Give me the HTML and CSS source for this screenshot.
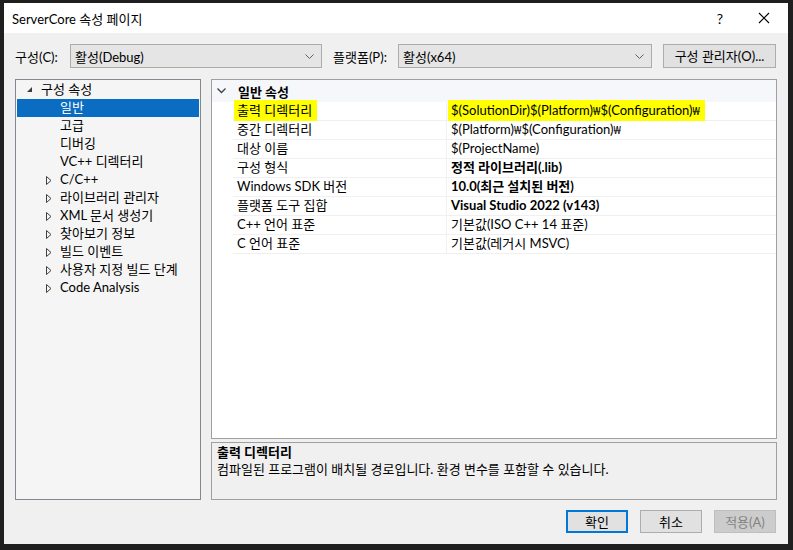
FILE: index.html
```html
<!DOCTYPE html>
<html lang="ko">
<head>
  <meta charset="UTF-8">
  <title>ServerCore 속성 페이지</title>
  <link rel="stylesheet" href="styles.css">
</head>
<body>
  <div class="dialog">
    <div class="titlebar">
      <span class="title">ServerCore 속성 페이지</span>
      <span class="help">?</span>
      <svg class="close" width="12" height="12" viewBox="0 0 12 12"><path d="M1 1 L11 11 M11 1 L1 11" stroke="#000" stroke-width="1.1" fill="none"/></svg>
    </div>

    <div class="toolbar">
      <span class="lbl lbl-conf">구성(C):</span>
      <div class="combo combo-conf">
        <span>활성(Debug)</span>
        <svg width="9" height="5" viewBox="0 0 9 5"><path d="M0.5 0.5 L4.5 4.5 L8.5 0.5" stroke="#606060" fill="none"/></svg>
      </div>
      <span class="lbl lbl-plat">플랫폼(P):</span>
      <div class="combo combo-plat">
        <span>활성(x64)</span>
        <svg width="9" height="5" viewBox="0 0 9 5"><path d="M0.5 0.5 L4.5 4.5 L8.5 0.5" stroke="#606060" fill="none"/></svg>
      </div>
      <button class="btn btn-mgr">구성 관리자(O)...</button>
    </div>

    <div class="main">
      <div class="tree">
        <div class="node root"><span class="tri-open"></span>구성 속성</div>
        <div class="node leaf selected">일반</div>
        <div class="node leaf">고급</div>
        <div class="node leaf">디버깅</div>
        <div class="node leaf">VC++ 디렉터리</div>
        <div class="node"><svg class="tri-closed" width="6" height="9" viewBox="0 0 6 9"><path d="M0.5 0.5 L5 4.5 L0.5 8.5 Z" stroke="#404040" fill="none"/></svg>C/C++</div>
        <div class="node"><svg class="tri-closed" width="6" height="9" viewBox="0 0 6 9"><path d="M0.5 0.5 L5 4.5 L0.5 8.5 Z" stroke="#404040" fill="none"/></svg>라이브러리 관리자</div>
        <div class="node"><svg class="tri-closed" width="6" height="9" viewBox="0 0 6 9"><path d="M0.5 0.5 L5 4.5 L0.5 8.5 Z" stroke="#404040" fill="none"/></svg>XML 문서 생성기</div>
        <div class="node"><svg class="tri-closed" width="6" height="9" viewBox="0 0 6 9"><path d="M0.5 0.5 L5 4.5 L0.5 8.5 Z" stroke="#404040" fill="none"/></svg>찾아보기 정보</div>
        <div class="node"><svg class="tri-closed" width="6" height="9" viewBox="0 0 6 9"><path d="M0.5 0.5 L5 4.5 L0.5 8.5 Z" stroke="#404040" fill="none"/></svg>빌드 이벤트</div>
        <div class="node"><svg class="tri-closed" width="6" height="9" viewBox="0 0 6 9"><path d="M0.5 0.5 L5 4.5 L0.5 8.5 Z" stroke="#404040" fill="none"/></svg>사용자 지정 빌드 단계</div>
        <div class="node"><svg class="tri-closed" width="6" height="9" viewBox="0 0 6 9"><path d="M0.5 0.5 L5 4.5 L0.5 8.5 Z" stroke="#404040" fill="none"/></svg>Code Analysis</div>
      </div>

      <div class="right">
        <div class="grid">
          <div class="category">
            <svg class="chev" width="9" height="6" viewBox="0 0 9 6"><path d="M0.5 0.5 L4.5 4.5 L8.5 0.5" stroke="#404040" stroke-width="1.3" fill="none"/></svg>
            <span>일반 속성</span>
          </div>
          <div class="prop">
            <div class="name"><span class="mark">출력 디렉터리</span></div>
            <div class="value"><span class="mark">$(SolutionDir)$(Platform)<span class="won">₩</span>$(Configuration)<span class="won">₩</span></span></div>
          </div>
          <div class="prop">
            <div class="name">중간 디렉터리</div>
            <div class="value">$(Platform)<span class="won">₩</span>$(Configuration)<span class="won">₩</span></div>
          </div>
          <div class="prop">
            <div class="name">대상 이름</div>
            <div class="value">$(ProjectName)</div>
          </div>
          <div class="prop">
            <div class="name">구성 형식</div>
            <div class="value bold">정적 라이브러리(.lib)</div>
          </div>
          <div class="prop">
            <div class="name">Windows SDK 버전</div>
            <div class="value bold">10.0(최근 설치된 버전)</div>
          </div>
          <div class="prop">
            <div class="name">플랫폼 도구 집합</div>
            <div class="value bold">Visual Studio 2022 (v143)</div>
          </div>
          <div class="prop">
            <div class="name">C++ 언어 표준</div>
            <div class="value">기본값(ISO C++ 14 표준)</div>
          </div>
          <div class="prop">
            <div class="name">C 언어 표준</div>
            <div class="value">기본값(레거시 MSVC)</div>
          </div>
        </div>

        <div class="desc">
          <div class="desc-title">출력 디렉터리</div>
          <div class="desc-text">컴파일된 프로그램이 배치될 경로입니다. 환경 변수를 포함할 수 있습니다.</div>
        </div>
      </div>
    </div>

    <div class="footer">
      <button class="btn btn-ok">확인</button>
      <button class="btn">취소</button>
      <button class="btn btn-disabled">적용(A)</button>
    </div>
  </div>
</body>
</html>
```

FILE: styles.css
```css
body {
  margin: 0;
  background: #1f1f1f;
  font-family: "Lato", "Noto Sans CJK KR", sans-serif;
  font-size: 13px;
  color: #000;
}
.dialog {
  margin: 3px 0 0 4px;
  width: 784px;
  height: 541px;
  background: #f0f0f0;
  display: flex;
  flex-direction: column;
}
.titlebar {
  height: 30px;
  background: #fff;
  display: flex;
  align-items: center;
  padding-left: 8px;
}
.title {
  flex: 1;
}
.help {
  font-size: 14px;
  margin-right: 35px;
}
.close {
  margin-right: 18px;
}
.toolbar {
  display: flex;
  align-items: center;
  margin-top: 11px;
  padding-left: 11px;
  height: 24px;
}
.lbl {
  white-space: nowrap;
}
.lbl-conf {
  width: 55px;
}
.lbl-plat {
  width: 65px;
  margin-left: 11px;
}
.combo {
  height: 24px;
  background: #e5e5e5;
  border: 1px solid #acacac;
  display: flex;
  align-items: center;
  justify-content: space-between;
  padding: 0 7px 0 4px;
  box-sizing: border-box;
}
.combo-conf {
  width: 252px;
}
.combo-plat {
  width: 254px;
}
.btn {
  font-family: inherit;
  font-size: 13px;
  line-height: 18px;
  background: #e1e1e1;
  border: 1px solid #adadad;
  height: 23px;
  width: 62px;
  padding: 0;
  color: #000;
}
.btn-mgr {
  width: 113px;
  height: 24px;
  margin-left: 11px;
}
.main {
  display: flex;
  margin-top: 11px;
  padding-left: 11px;
  height: 421px;
}
.tree {
  width: 186px;
  box-sizing: border-box;
  border: 1px solid #828790;
  background: #f5f5f5;
  padding: 1px 1px 0;
}
.node {
  height: 18px;
  line-height: 17px;
  padding-left: 43px;
  position: relative;
  white-space: nowrap;
}
.node.root {
  padding-left: 24px;
}
.node.selected {
  background: #0a6dc2;
  color: #fff;
}
.tri-open {
  position: absolute;
  left: 10px;
  top: 6px;
  width: 0;
  height: 0;
  border-left: 5px solid transparent;
  border-bottom: 5px solid #3c3c3c;
}
.tri-closed {
  position: absolute;
  left: 29px;
  top: 5px;
}
.right {
  margin-left: 10px;
  width: 566px;
  display: flex;
  flex-direction: column;
}
.grid {
  height: 360px;
  box-sizing: border-box;
  border: 1px solid #a0a0a0;
  background: #fff;
}
.category {
  height: 22px;
  background: #f5f7fa;
  display: flex;
  align-items: center;
  font-weight: bold;
}
.chev {
  margin-left: 5px;
  margin-right: 12px;
}
.prop {
  display: flex;
  height: 19px;
  line-height: 17px;
  margin-left: 21px;
}
.prop .name {
  width: 209px;
  padding-left: 4px;
  border-bottom: 1px solid #f0f0f0;
  white-space: nowrap;
}
.prop .value {
  flex: 1;
  padding-left: 4px;
  border-left: 1px solid #f0f0f0;
  border-bottom: 1px solid #f0f0f0;
  white-space: nowrap;
}
.won {
  font-family: "Noto Sans", sans-serif;
  font-size: 11px;
}
.bold {
  font-weight: bold;
}
.mark {
  background: #ffff00;
  padding: 2px 5px 3px 3px;
  margin-left: -3px;
}
.desc {
  margin-top: 3px;
  height: 58px;
  box-sizing: border-box;
  border: 1px solid #a0a0a0;
  padding: 1px 5px;
}
.desc-title {
  font-weight: bold;
  line-height: 16px;
}
.desc-text {
  line-height: 18px;
}
.footer {
  display: flex;
  justify-content: flex-end;
  gap: 12px;
  padding-right: 12px;
  margin-top: 10px;
}
.btn-ok {
  border: 2px solid #0078d7;
}
.btn-disabled {
  background: #cccccc;
  border-color: #bfbfbf;
  color: #838383;
}
```
